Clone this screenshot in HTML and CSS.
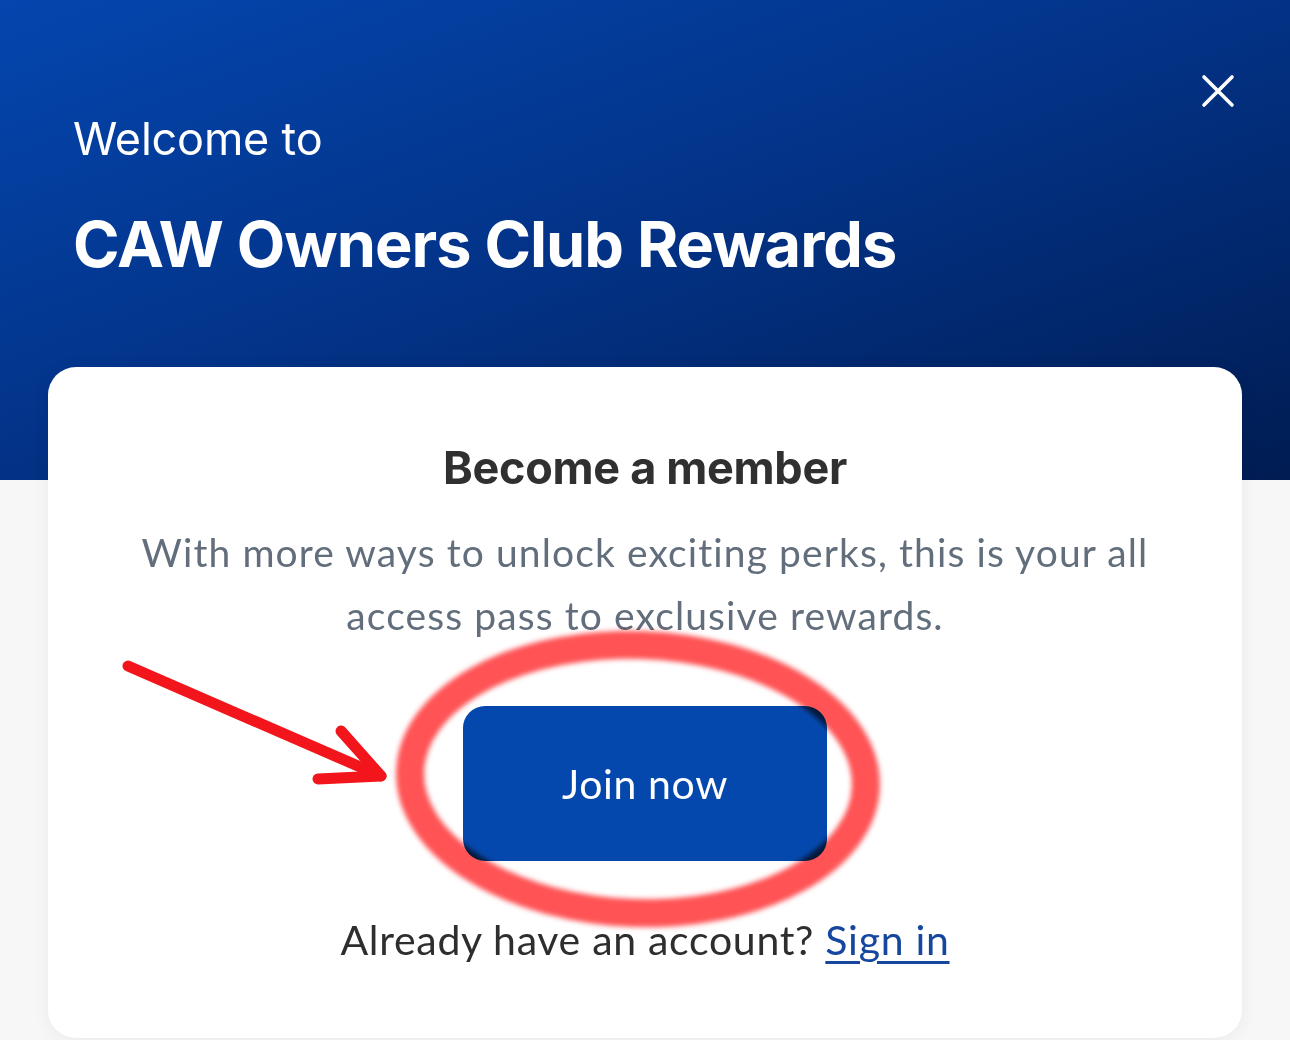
FILE: index.html
```html
<!DOCTYPE html>
<html lang="en">
<head>
  <meta charset="UTF-8">
  <meta name="viewport" content="width=device-width, initial-scale=1.0">
  <title>CAW Owners Club Rewards</title>
  <link rel="stylesheet" href="styles.css">
</head>
<body>
  <header class="hero">
    <div class="hero-text">
      <p class="hero-welcome">Welcome to</p>
      <h1 class="hero-title">CAW Owners Club Rewards</h1>
    </div>
    <button class="close-btn" aria-label="Close">
      <svg width="34" height="34" viewBox="0 0 34 34">
        <path d="M3 3 L31 31 M31 3 L3 31" stroke="#fff" stroke-width="3.6" stroke-linecap="round" fill="none"/>
      </svg>
    </button>
  </header>

  <main class="card">
    <h2 class="card-title">Become a member</h2>
    <p class="card-text">With more ways to unlock exciting perks, this is your all access pass to exclusive rewards.</p>
    <button class="join-btn">Join now</button>
    <p class="signin">Already have an account? <a href="#">Sign in</a></p>
  </main>

  <!-- hand-drawn highlight over the screenshot -->
  <svg class="markup" width="1290" height="1040" viewBox="0 0 1290 1040">
    <defs>
      <filter id="soft" x="-10%" y="-10%" width="120%" height="120%">
        <feGaussianBlur stdDeviation="2.8"/>
      </filter>
    </defs>
    <ellipse cx="638" cy="779" rx="228" ry="134" fill="none" stroke="#ff5254" stroke-width="28" filter="url(#soft)" transform="rotate(2 638 779)"/>
    <g stroke="#f2161c" stroke-width="11" stroke-linecap="round" stroke-linejoin="round" fill="none">
      <path d="M128 666 L381 776"/>
      <path d="M341 731 L381 776 L318 779"/>
    </g>
  </svg>
</body>
</html>
```

FILE: styles.css
```css
body {
  margin: 0;
  background-color: #f7f7f8;
  font-family: Lato, "Open Sans", sans-serif;
  width: 1290px;
  height: 1040px;
  overflow: hidden;
  position: relative;
}
.hero {
  height: 480px;
  box-sizing: border-box;
  padding: 70px 55px 0 73px;
  background: linear-gradient(160deg, #0446ae 0%, #03348a 45%, #001c52 100%);
  display: flex;
  justify-content: space-between;
  align-items: flex-start;
}
.hero-welcome {
  margin: 41px 0 0;
  color: #fff;
  font-family: Inter, sans-serif;
  font-size: 45px;
  font-weight: 400;
  letter-spacing: -0.2px;
}
.hero-title {
  margin: 40px 0 0;
  color: #fff;
  font-family: Inter, sans-serif;
  font-size: 63px;
  font-weight: 700;
  letter-spacing: -1px;
}
.close-btn {
  background: none;
  border: none;
  padding: 0;
  margin: 4px 0 0;
  cursor: pointer;
  display: flex;
}
.card {
  margin: -113px 48px 0;
  height: 671px;
  background: #fff;
  border-radius: 28px;
  box-shadow: 0 2px 18px rgba(0, 0, 0, 0.06);
  display: flex;
  flex-direction: column;
  align-items: center;
  padding: 73px 40px 0;
  box-sizing: border-box;
  text-align: center;
}
.card-title {
  margin: 0;
  color: #303030;
  font-family: Inter, sans-serif;
  font-size: 45px;
  font-weight: 700;
  letter-spacing: -0.3px;
}
.card-text {
  margin: 26px 0 0;
  max-width: 1040px;
  color: #636e7c;
  font-size: 39px;
  letter-spacing: 1.1px;
  line-height: 63px;
}
.join-btn {
  margin-top: 59px;
  width: 364px;
  height: 155px;
  border: none;
  border-radius: 22px;
  background-color: #0548ad;
  color: #fff;
  font-family: Lato, sans-serif;
  font-size: 41px;
  letter-spacing: 0.6px;
  cursor: pointer;
}
.signin {
  margin: 54px 0 0;
  color: #2e2e2e;
  font-size: 41px;
  letter-spacing: 0.7px;
}
.signin a {
  color: #16479e;
  text-decoration: underline;
  text-underline-offset: 6px;
  text-decoration-thickness: 3px;
}
.markup {
  position: absolute;
  left: 0;
  top: 0;
  pointer-events: none;
  mix-blend-mode: multiply;
}
```
